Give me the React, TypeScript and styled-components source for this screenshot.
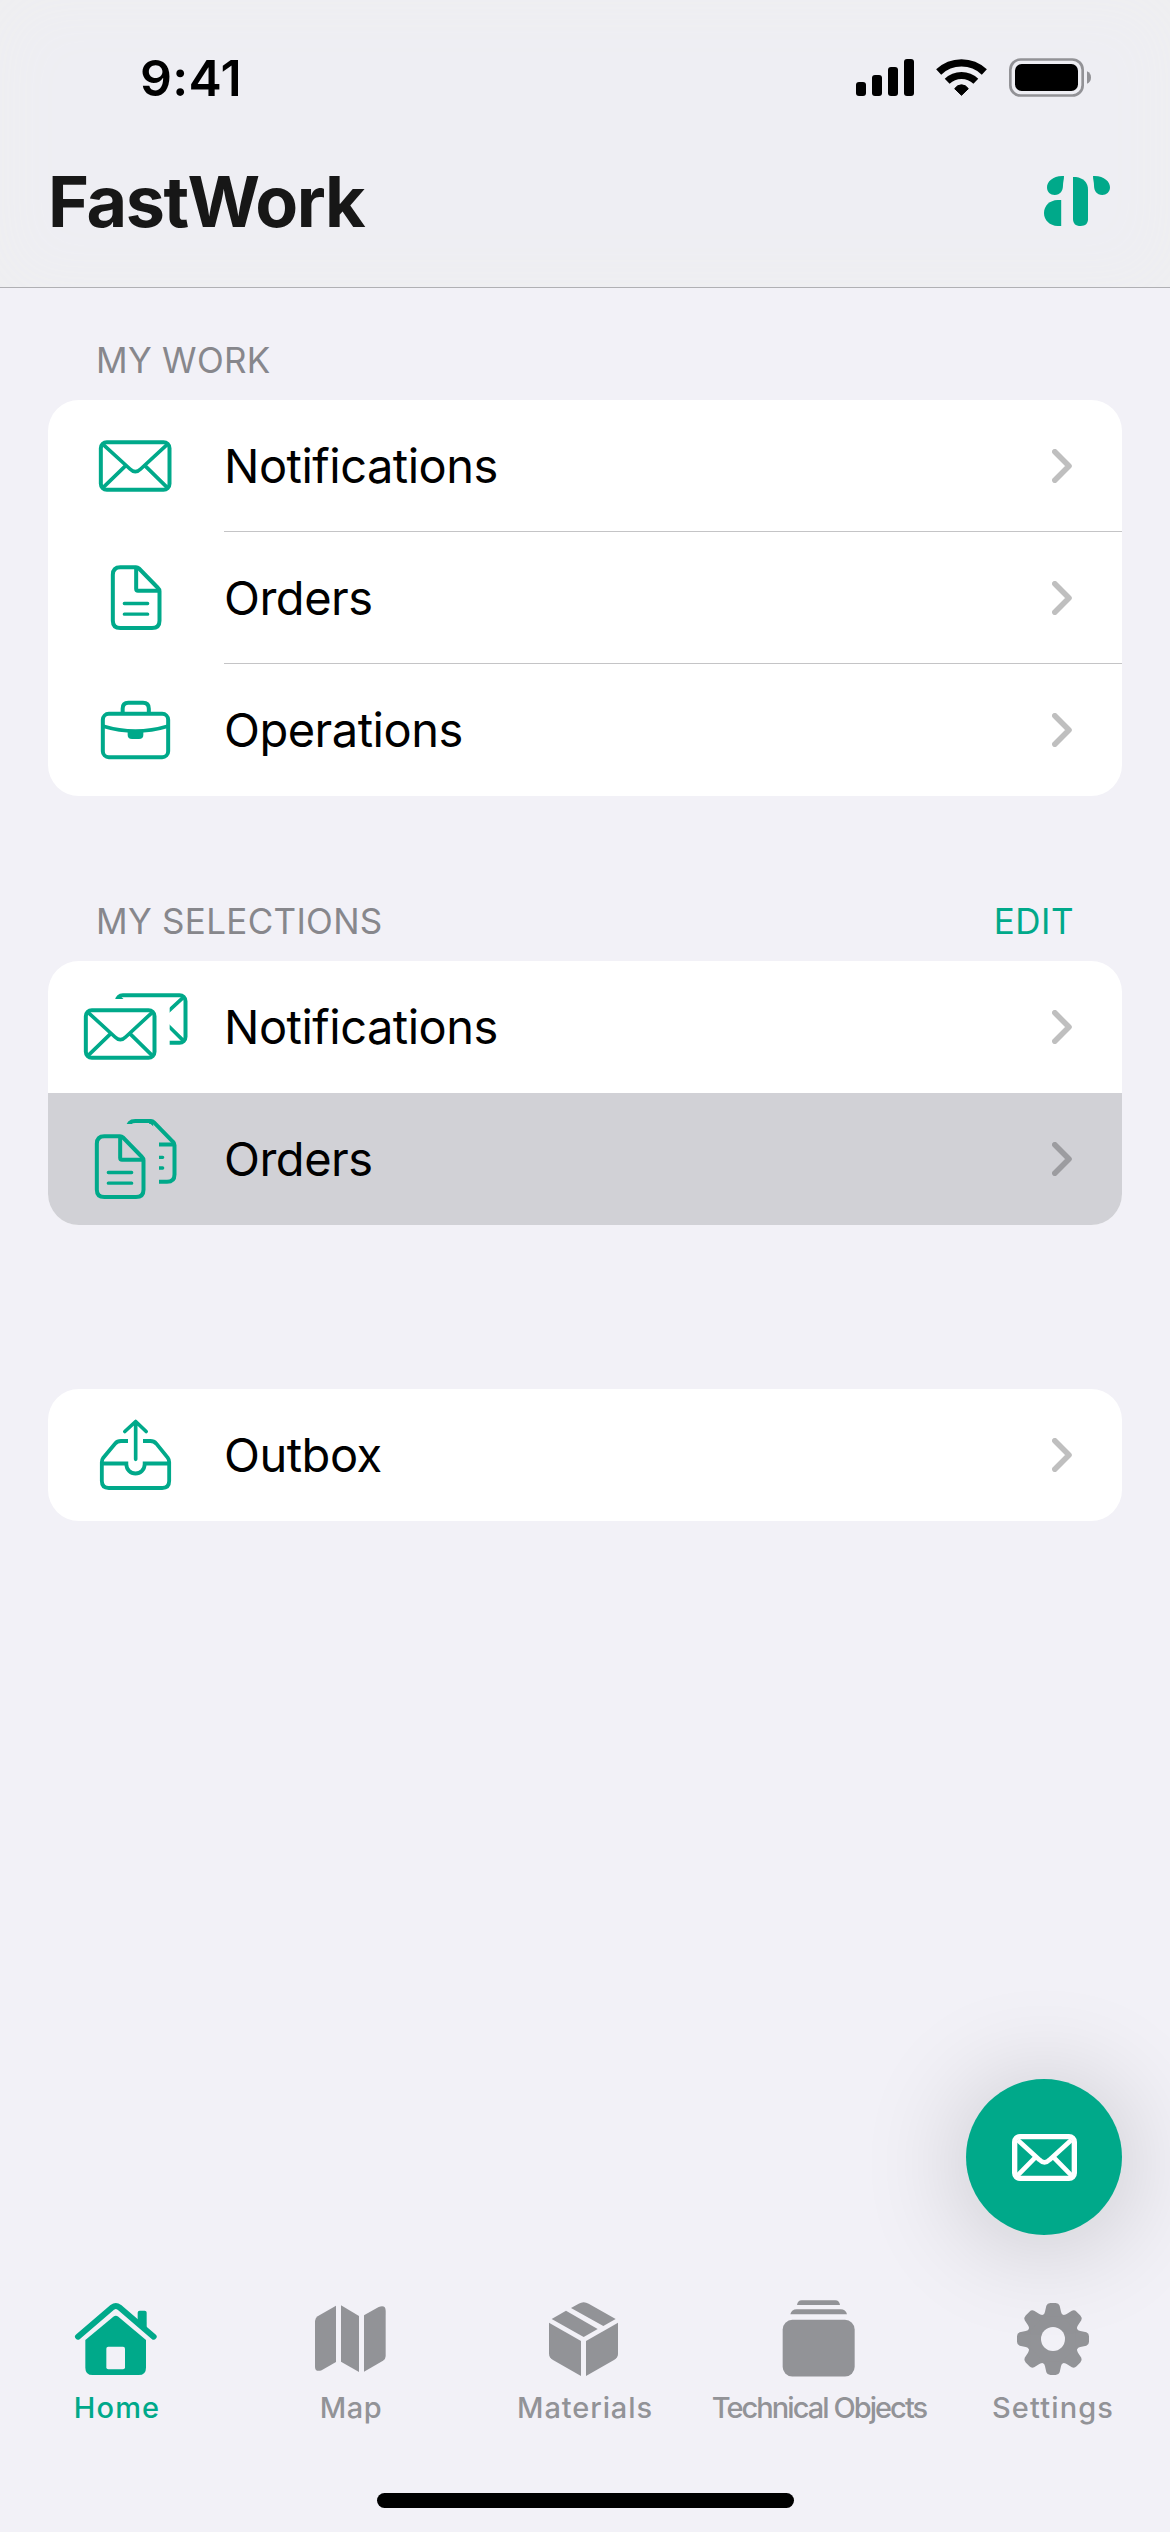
import React from "react";
import styled, { createGlobalStyle } from "styled-components";

const GREEN = "#00a98a";
const GRAY = "#929397";
const BG = "#f2f1f7";

const GlobalStyle = createGlobalStyle`
  * { box-sizing: border-box; }
  body { margin: 0; background: ${BG}; }
`;

const Screen = styled.div`
  position: relative;
  display: flex;
  flex-direction: column;
  width: 1170px;
  height: 2532px;
  overflow: hidden;
  background: ${BG};
  color: #000;
  font-family: Inter, "Liberation Sans", sans-serif;
`;

const Header = styled.header`
  display: flex;
  flex-direction: column;
  flex: none;
  height: 288px;
  background: #eeeef3;
  box-shadow: inset 0 0 70px #efeff0;
  border-bottom: 1px solid #b0b0b4;
`;

const StatusBar = styled.div`
  display: flex;
  align-items: center;
  height: 156px;
  padding: 0 79px 0 140px;
`;

const Clock = styled.time`
  flex: 1;
  font-size: 50px;
  font-weight: 600;
  letter-spacing: 0.3px;
  line-height: 60px;
`;

const StatusIcons = styled.svg`
  display: block;
  width: 235px;
  height: 40px;
`;

const TitleBar = styled.div`
  display: flex;
  align-items: center;
  justify-content: space-between;
  height: 90px;
  padding: 0 60px 0 48px;
`;

const Title = styled.h1`
  margin: 0;
  padding-top: 2px;
  font-size: 70px;
  font-weight: 700;
  line-height: 88px;
  letter-spacing: -1.4px;
  color: #171717;
`;

const Logo = styled.svg`
  display: block;
  width: 66px;
  height: 50px;
`;

const Content = styled.main`
  display: flex;
  flex-direction: column;
  flex: 1;
  padding: 0 48px;
`;

const SectionHeader = styled.div<{ $height: number }>`
  display: flex;
  align-items: flex-end;
  justify-content: space-between;
  height: ${(p) => p.$height}px;
  padding: 0 48px 19px;
`;

const SectionTitle = styled.h2`
  margin: 0;
  font-size: 35px;
  font-weight: 400;
  line-height: 42px;
  letter-spacing: 0.3px;
  color: #87878c;
`;

const EditButton = styled.button`
  margin: 0;
  padding: 0;
  border: 0;
  background: none;
  font: 400 35px/42px Inter, "Liberation Sans", sans-serif;
  letter-spacing: 0.5px;
  color: ${GREEN};
`;

const Card = styled.div`
  display: flex;
  flex-direction: column;
  border-radius: 31px;
  background: #fff;
  overflow: hidden;
`;

const Row = styled.div<{ $pressed?: boolean }>`
  display: flex;
  height: 132px;
  background: ${(p) => (p.$pressed ? "#d1d1d6" : "transparent")};
`;

const RowIcon = styled.svg`
  display: block;
  flex: none;
  width: 176px;
  height: 132px;
  fill: none;
  stroke: ${GREEN};
  stroke-width: 12;
  stroke-linejoin: round;
`;

const RowBody = styled.div<{ $divider?: boolean }>`
  display: flex;
  flex: 1;
  align-items: center;
  justify-content: space-between;
  padding-right: 50px;
  border-bottom: ${(p) => (p.$divider ? "1px solid #c4c4c6" : "none")};
`;

const RowLabel = styled.span`
  font-size: 47px;
  line-height: 132px;
  letter-spacing: -0.5px;
`;

const Chevron = styled.svg`
  display: block;
  width: 20px;
  height: 34px;
  fill: none;
  stroke: #000;
  stroke-opacity: 0.25;
  stroke-width: 5.6;
  stroke-linecap: round;
  stroke-linejoin: round;
`;

const Spacer = styled.div`
  height: 164px;
`;

const Fab = styled.button`
  position: absolute;
  right: 48px;
  bottom: 297px;
  display: flex;
  align-items: center;
  justify-content: center;
  width: 156px;
  height: 156px;
  padding: 0;
  border: 0;
  border-radius: 50%;
  background: ${GREEN};
  box-shadow: 0 6px 110px rgba(0, 0, 0, 0.2);
`;

const FabIcon = styled.svg`
  display: block;
  width: 65px;
  height: 47px;
  fill: none;
  stroke: #fff;
  stroke-width: 16;
  stroke-linejoin: round;
`;

const TabBar = styled.nav`
  display: grid;
  grid-template-columns: repeat(5, 1fr);
  flex: none;
  height: 197px;
`;

const Tab = styled.div<{ $active?: boolean }>`
  display: flex;
  flex-direction: column;
  align-items: center;
  gap: 10px;
  color: ${(p) => (p.$active ? GREEN : GRAY)};
`;

const TabIcon = styled.svg`
  display: block;
  width: 90px;
  height: 84px;
  fill: currentColor;
`;

const TabLabel = styled.span<{ $spacing: number }>`
  font-size: 29px;
  font-weight: 500;
  line-height: 36px;
  letter-spacing: ${(p) => p.$spacing}px;
  white-space: nowrap;
`;

const HomeIndicator = styled.div`
  width: 417px;
  height: 15px;
  margin: 0 auto 24px;
  border-radius: 8px;
  background: #000;
`;

const Envelope = () => (
  <g>
    <rect x="158.5" y="126.5" width="206" height="143" rx="18" />
    <path d="M165 133 L246 207 Q262 223 278 207 L358 133" strokeWidth="11" />
    <path d="M234 196 L165 263 M290 196 L358 263" strokeWidth="11" />
  </g>
);

const Page = () => (
  <g>
    <path d="M217 105.5 H264 Q269 105.5 273 109.5 L330 168 Q334.500 172 334.500 178 V266 Q334.500 288 312 288 H217 Q194.500 288 194.500 266 V128 Q194.500 105.500 217 105.500Z" />
    <path d="M264.500 108 V170 Q264.500 176 270 176 H332" />
    <path d="M229 214.500 H299 M229 246.500 H299" strokeWidth="10" strokeLinecap="round" />
  </g>
);

const icons: Record<string, React.ReactNode> = {
  envelope: <Envelope />,
  page: <Page />,
  briefcase: (
    <g>
      <rect x="164.500" y="149.500" width="196" height="130" rx="18" />
      <path d="M224 147 V134 Q224 116.500 241 116.500 H285 Q302.500 116.500 302.500 134 V147" />
      <path d="M166 187 Q262 216 359 187" strokeWidth="11" />
      <path d="M239 198 H286 V212 Q286 225 273 225 H252 Q239 225 239 212Z" fill={GREEN} stroke="none" />
    </g>
  ),
  envelopes: (
    <g>
      <clipPath id="back-envelope">
        <path d="M180 80 H440 V270 H365 V114 H180Z" />
      </clipPath>
      <g transform="translate(-45 21)"><Envelope /></g>
      <g clipPath="url(#back-envelope)">
        <g transform="translate(48 -24)"><Envelope /></g>
      </g>
    </g>
  ),
  pages: (
    <g>
      <clipPath id="back-page">
        <path d="M220 60 H420 V290 H333 V116 L308 93 H220Z" />
      </clipPath>
      <g transform="translate(-48 24)"><Page /></g>
      <g clipPath="url(#back-page)">
        <g transform="translate(45 -21.500)"><Page /></g>
      </g>
    </g>
  ),
  outbox: (
    <g>
      <path d="M263 98 V211 M230.500 127.500 L263 97.500 L294.500 127.500" strokeWidth="11" strokeLinecap="round" />
      <path d="M240 156 H219 Q208 156 201 164 L166 206 Q161.500 212 161.500 220 V276 Q161.500 297 182.500 297 H342.500 Q363.500 297 363.500 276 V220 Q363.500 212 359 206 L325 164 Q318 156 307 156 H285" strokeWidth="11.500" />
      <path d="M162 223.500 H235 V226 A27.500 27.500 0 0 0 290 226 V223.500 H363" strokeWidth="11.500" strokeLinejoin="miter" />
    </g>
  ),
};

interface Item {
  icon: string;
  label: string;
  pressed?: boolean;
}

const ItemCard = ({ items, dividers }: { items: Item[]; dividers?: boolean }) => (
  <Card>
    {items.map((item, i) => (
      <Row key={item.label} $pressed={item.pressed}>
        <RowIcon viewBox="0 0 528 396">{icons[item.icon]}</RowIcon>
        <RowBody $divider={dividers && i < items.length - 1}>
          <RowLabel>{item.label}</RowLabel>
          <Chevron viewBox="0 0 20 34">
            <path d="M2.800 2.800 L17 17 L2.800 31.200" />
          </Chevron>
        </RowBody>
      </Row>
    ))}
  </Card>
);

const teeth = [0, 45, 90, 135, 180, 225, 270, 315];

const tabs = [
  {
    label: "Home",
    spacing: 1.2,
    active: true,
    viewBox: "96 48 270 252",
    art: (
      <g>
        <path
          d="M114 170 L217 82 Q227.500 74 238 82 L341 170"
          fill="none"
          stroke="currentColor"
          strokeWidth="18"
          strokeLinecap="round"
        />
        <path d="M293 98 Q293 92 299 92 H314 Q320 92 320 98 V150 L293 126Z" />
        <path d="M220 110 Q227.500 104 235 110 L318 180 V263 Q318 285 296 285 H158 Q136 285 136 263 V180Z" />
        <rect x="199" y="200" width="56" height="68" rx="6" fill={BG} />
      </g>
    ),
  },
  {
    label: "Map",
    spacing: 0.5,
    viewBox: "798 48 270 252",
    art: (
      <g>
        <path d="M888 77 V246 L845 271 Q825 277 825 260 V123 Q825 114 833 109Z" />
        <path d="M903 76 L957 108 V276 L903 245Z" />
        <path d="M972 106 L1016 81 Q1037 74 1037 92 V228 Q1037 237 1029 242 L972 275Z" />
      </g>
    ),
  },
  {
    label: "Materials",
    spacing: 0.9,
    viewBox: "180 48 270 252",
    art: (
      <g>
        <path d="M273 84 L296 71 Q311 62 326 71 L407 117 L370 138Z" />
        <path d="M258 92 L353 147 L311 171 L215 117Z" />
        <path d="M207 128 L303 183 V288 L219 240 Q207 233 207 221Z" />
        <path d="M414 128 L318 183 V288 L402 240 Q414 233 414 221Z" />
      </g>
    ),
  },
  {
    label: "Technical Objects",
    spacing: -1.95,
    viewBox: "882 48 270 252",
    art: (
      <g>
        <rect x="908" y="119.500" width="216" height="170" rx="29" />
        <path d="M931 102.500 Q935 87.500 950 87.500 H1082 Q1097 87.500 1101 102.500Z" />
        <path d="M951 75 Q953 60.500 965 60.500 H1066 Q1078 60.500 1080 75Z" />
      </g>
    ),
  },
  {
    label: "Settings",
    spacing: 1.15,
    viewBox: "264 48 270 252",
    art: (
      <g>
        <circle cx="399" cy="177" r="79" />
        {teeth.map((angle) => (
          <path
            key={angle}
            transform={`rotate(${angle} 399 177)`}
            d="M362 110 Q373 105 375 95 L379 77 Q382 69 391 69 H407 Q416 69 419 77 L423 95 Q425 105 436 110Z"
          />
        ))}
        <circle cx="399" cy="177" r="36" fill={BG} />
      </g>
    ),
  },
];

export default function App() {
  return (
    <Screen>
      <GlobalStyle />
      <Header>
        <StatusBar>
          <Clock>9:41</Clock>
          <StatusIcons viewBox="168 174 705 120">
            <rect x="168" y="246" width="30" height="42" rx="9" />
            <rect x="216" y="225" width="30" height="63" rx="9" />
            <rect x="264" y="201" width="30" height="87" rx="9" />
            <rect x="312" y="177" width="30" height="111" rx="9" />
            <path d="M416 216 A99.500 99.500 0 0 1 553 216" fill="none" stroke="#000" strokeWidth="22" />
            <path d="M441.500 243.500 A62 62 0 0 1 527.500 243.500" fill="none" stroke="#000" strokeWidth="21" />
            <path d="M464 266 Q472 254.500 484.500 254.500 Q497 254.500 505 266 L484.500 286Z" stroke="#000" strokeWidth="3" strokeLinejoin="round" />
            <rect x="631" y="178.500" width="217" height="108" rx="31" fill="none" stroke="#929296" strokeWidth="8" />
            <rect x="645" y="192" width="189" height="81" rx="20" />
            <path d="M861 214 Q873 219 873 232.500 Q873 246 861 251Z" fill="#929296" />
          </StatusIcons>
        </StatusBar>
        <TitleBar>
          <Title>FastWork</Title>
          <Logo viewBox="732 528 198 150" fill={GREEN}>
            <path d="M792 528 C760 527 741 544 741 562 C741 577 751 585 764 585 C781 585 789 573 789 556 C789 545 792 540 792 528Z" />
            <path d="M783 600 H773 C749 601 732 617 732 639 S749 677 773 678 H783Z" />
            <rect x="783" y="600" width="3" height="78" fillOpacity="0.2" />
            <path d="M819 531 H828 C850 534 864 548 864 568 V658 C864 671 856 678 842 678 C826 678 819 670 819 656Z" />
            <path d="M879 528 C911 527 930 544 930 562 C930 577 919 585 907 585 C890 585 882 573 882 556 C882 545 879 540 879 528Z" />
          </Logo>
        </TitleBar>
      </Header>

      <Content>
        <SectionHeader $height={112}>
          <SectionTitle>MY WORK</SectionTitle>
        </SectionHeader>
        <ItemCard
          dividers
          items={[
            { icon: "envelope", label: "Notifications" },
            { icon: "page", label: "Orders" },
            { icon: "briefcase", label: "Operations" },
          ]}
        />
        <SectionHeader $height={165}>
          <SectionTitle>MY SELECTIONS</SectionTitle>
          <EditButton>EDIT</EditButton>
        </SectionHeader>
        <ItemCard
          items={[
            { icon: "envelopes", label: "Notifications" },
            { icon: "pages", label: "Orders", pressed: true },
          ]}
        />
        <Spacer />
        <ItemCard items={[{ icon: "outbox", label: "Outbox" }]} />
      </Content>

      <TabBar>
        {tabs.map((tab) => (
          <Tab key={tab.label} $active={tab.active}>
            <TabIcon viewBox={tab.viewBox}>{tab.art}</TabIcon>
            <TabLabel $spacing={tab.spacing}>{tab.label}</TabLabel>
          </Tab>
        ))}
      </TabBar>
      <HomeIndicator />

      <Fab aria-label="New notification">
        <FabIcon viewBox="333 312 195 141">
          <rect x="341" y="320" width="179" height="125" rx="16" />
          <path d="M350 330 L415 389 Q430.500 405 446 389 L511 330" strokeWidth="14" />
          <path d="M403 382 L350 436 M458 382 L511 436" strokeWidth="14" />
        </FabIcon>
      </Fab>
    </Screen>
  );
}
